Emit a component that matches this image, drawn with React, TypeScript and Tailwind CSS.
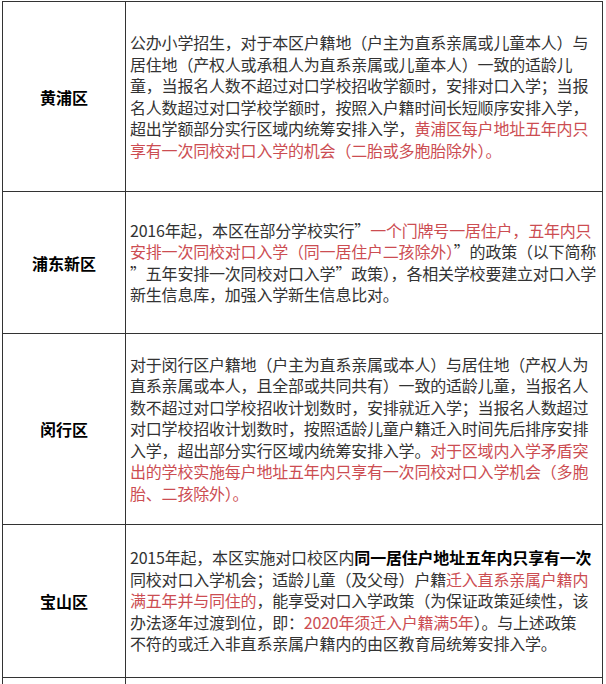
type Seg = { t: string; red?: boolean; bold?: boolean };

type Row = {
  district: string;
  height: string;
  lines: Seg[][];
};

const rows: Row[] = [
  {
    district: "黄浦区",
    height: "h-[190px]",
    lines: [
      [{ t: "公办小学招生，对于本区户籍地（户主为直系亲属或儿童本人）与" }],
      [{ t: "居住地（产权人或承租人为直系亲属或儿童本人）一致的适龄儿" }],
      [{ t: "童，当报名人数不超过对口学校招收学额时，安排对口入学；当报" }],
      [{ t: "名人数超过对口学校学额时，按照入户籍时间长短顺序安排入学，" }],
      [
        { t: "超出学额部分实行区域内统筹安排入学，" },
        { t: "黄浦区每户地址五年内只", red: true },
      ],
      [{ t: "享有一次同校对口入学的机会（二胎或多胞胎除外）。", red: true }],
    ],
  },
  {
    district: "浦东新区",
    height: "h-[142px]",
    lines: [
      [
        { t: "2016年起，本区在部分学校实行”" },
        { t: "一个门牌号一居住户，五年内只", red: true },
      ],
      [
        { t: "安排一次同校对口入学（同一居住户二孩除外）", red: true },
        { t: "”的政策（以下简称" },
      ],
      [{ t: "”五年安排一次同校对口入学”政策），各相关学校要建立对口入学" }],
      [{ t: "新生信息库，加强入学新生信息比对。" }],
    ],
  },
  {
    district: "闵行区",
    height: "h-[191px]",
    lines: [
      [{ t: "对于闵行区户籍地（户主为直系亲属或本人）与居住地（产权人为" }],
      [{ t: "直系亲属或本人，且全部或共同共有）一致的适龄儿童，当报名人" }],
      [{ t: "数不超过对口学校招收计划数时，安排就近入学；当报名人数超过" }],
      [{ t: "对口学校招收计划数时，按照适龄儿童户籍迁入时间先后排序安排" }],
      [
        { t: "入学，超出部分实行区域内统筹安排入学。" },
        { t: "对于区域内入学矛盾突", red: true },
      ],
      [{ t: "出的学校实施每户地址五年内只享有一次同校对口入学机会（多胞", red: true }],
      [{ t: "胎、二孩除外）。", red: true }],
    ],
  },
  {
    district: "宝山区",
    height: "h-[153px]",
    lines: [
      [
        { t: "2015年起，本区实施对口校区内" },
        { t: "同一居住户地址五年内只享有一次", bold: true },
      ],
      [
        { t: "同校对口入学机会；适龄儿童（及父母）户籍" },
        { t: "迁入直系亲属户籍内", red: true },
      ],
      [
        { t: "满五年并与同住的", red: true },
        { t: "，能享受对口入学政策（为保证政策延续性，该" },
      ],
      [
        { t: "办法逐年过渡到位，即：" },
        { t: "2020年须迁入户籍满5年", red: true },
        { t: "）。与上述政策" },
      ],
      [{ t: "不符的或迁入非直系亲属户籍内的由区教育局统筹安排入学。" }],
    ],
  },
];

export default function App() {
  return (
    <div className="min-h-screen bg-white pl-[2px] pt-[1px] font-['Noto_Sans_CJK_SC','Noto_Sans',sans-serif] text-[16px] text-[#333]">
      <div className="w-[601px] border-x border-t border-[#333]">
        {rows.map((row) => (
          <div
            key={row.district}
            className={`grid grid-cols-[123px_1fr] border-b border-[#333] ${row.height}`}
          >
            <div className="flex items-center justify-center border-r border-[#333] font-bold text-black">
              {row.district}
            </div>
            <div className="flex flex-col justify-center pl-[4px] leading-[21.5px]">
              {row.lines.map((line, i) => (
                <div key={i} className="whitespace-nowrap tracking-[-0.2px]">
                  {line.map((s, j) => (
                    <span
                      key={j}
                      className={
                        s.red ? "text-[#cc4d52]" : s.bold ? "font-bold text-black" : undefined
                      }
                    >
                      {s.t}
                    </span>
                  ))}
                </div>
              ))}
            </div>
          </div>
        ))}
        <div className="grid h-[40px] grid-cols-[123px_1fr]">
          <div className="border-r border-[#333]" />
          <div />
        </div>
      </div>
    </div>
  );
}
